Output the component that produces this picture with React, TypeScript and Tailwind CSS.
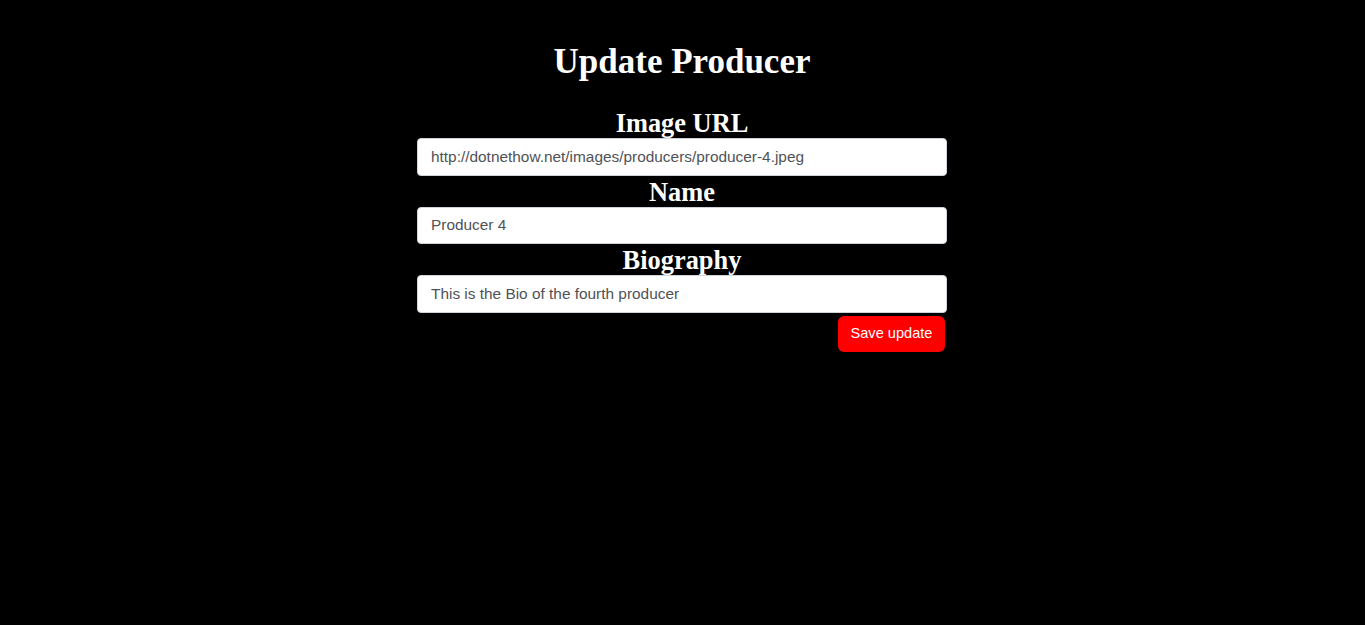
import { useState } from 'react';

export default function App() {
  const [imageUrl, setImageUrl] = useState('http://dotnethow.net/images/producers/producer-4.jpeg');
  const [name, setName] = useState('Producer 4');
  const [bio, setBio] = useState('This is the Bio of the fourth producer');

  const inputClass =
    "block w-full h-[37.5px] px-[13px] bg-white border border-[#ced4da] rounded-[4px] text-[15.4px] text-[#4f5257] font-['Liberation_Sans',Arial,sans-serif] outline-none";
  const labelClass =
    "block text-center text-[26.4px] leading-[28px] font-bold text-white font-['Liberation_Serif','Times_New_Roman',serif] pt-[2px] pb-[1px]";

  return (
    <div className="min-h-[625px] w-full bg-black flex justify-center pr-[1px]">
      <div className="w-[530px] pt-[42px]">
        <h1 className="text-center text-[35px] leading-[40px] font-bold text-white font-['Liberation_Serif','Times_New_Roman',serif] mb-[25px]">
          Update Producer
        </h1>
        <form onSubmit={(e) => e.preventDefault()}>
          <label className={labelClass}>Image URL</label>
          <input className={inputClass} value={imageUrl} onChange={(e) => setImageUrl(e.target.value)} />
          <label className={labelClass}>Name</label>
          <input className={inputClass} value={name} onChange={(e) => setName(e.target.value)} />
          <label className={labelClass}>Biography</label>
          <input className={inputClass} value={bio} onChange={(e) => setBio(e.target.value)} />
          <div className="flex justify-end pt-[3px] pr-[2px]">
            <button
              type="submit"
              className="h-[36px] w-[107px] rounded-[6px] bg-[#ff0000] text-white text-[14.6px] font-['Liberation_Sans',Arial,sans-serif]"
            >
              Save update
            </button>
          </div>
        </form>
      </div>
    </div>
  );
}
